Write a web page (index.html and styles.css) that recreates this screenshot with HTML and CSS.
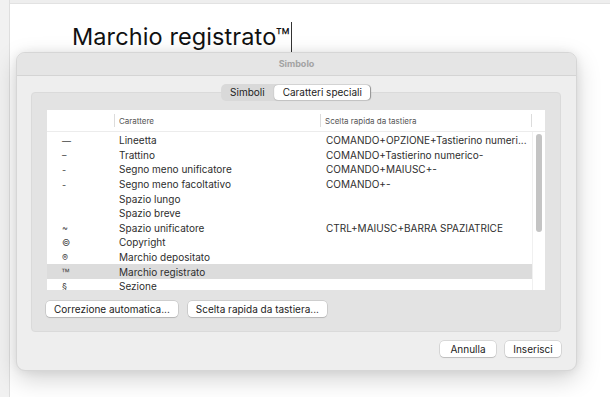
FILE: index.html
```html
<!DOCTYPE html>
<html lang="it">
<head>
<meta charset="utf-8">
<link rel="stylesheet" href="styles.css">
</head>
<body>
<div class="page">
  <div class="gutter"></div>
  <div class="doc">
    <div class="doc-text"><span class="heading">Marchio registrato™</span><span class="caret"></span></div>
  </div>
</div>

<div class="dialog">
  <div class="titlebar">Simbolo</div>
  <div class="dlg-body">
    <div class="panel">
      <div class="segmented">
        <span class="seg">Simboli</span>
        <span class="seg seg-on">Caratteri speciali</span>
      </div>
      <div class="table">
        <div class="thead">
          <div class="th c1"></div>
          <div class="th c2">Carattere</div>
          <div class="th c3">Scelta rapida da tastiera</div>
          <div class="th c4"></div>
        </div>
        <div class="tbody">
          <div class="rows">
            <div class="row"><span class="c1 sym">—</span><span class="c2">Lineetta</span><span class="c3">COMANDO+OPZIONE+Tastierino numeri...</span></div>
            <div class="row"><span class="c1 sym">–</span><span class="c2">Trattino</span><span class="c3">COMANDO+Tastierino numerico-</span></div>
            <div class="row"><span class="c1 sym">-</span><span class="c2">Segno meno unificatore</span><span class="c3">COMANDO+MAIUSC+-</span></div>
            <div class="row"><span class="c1 sym">-</span><span class="c2">Segno meno facoltativo</span><span class="c3">COMANDO+-</span></div>
            <div class="row"><span class="c1 sym"></span><span class="c2">Spazio lungo</span><span class="c3"></span></div>
            <div class="row"><span class="c1 sym"></span><span class="c2">Spazio breve</span><span class="c3"></span></div>
            <div class="row"><span class="c1 sym">~</span><span class="c2">Spazio unificatore</span><span class="c3">CTRL+MAIUSC+BARRA SPAZIATRICE</span></div>
            <div class="row"><span class="c1 sym">©</span><span class="c2">Copyright</span><span class="c3"></span></div>
            <div class="row"><span class="c1 sym">®</span><span class="c2">Marchio depositato</span><span class="c3"></span></div>
            <div class="row row-sel"><span class="c1 sym tm">™</span><span class="c2">Marchio registrato</span><span class="c3"></span></div>
            <div class="row"><span class="c1 sym">§</span><span class="c2">Sezione</span><span class="c3"></span></div>
          </div>
          <div class="scroll"><div class="thumb"></div></div>
        </div>
      </div>
      <div class="panel-buttons">
        <button class="btn">Correzione automatica...</button>
        <button class="btn">Scelta rapida da tastiera...</button>
      </div>
    </div>
    <div class="footer">
      <button class="btn btn-foot">Annulla</button>
      <button class="btn btn-foot">Inserisci</button>
    </div>
  </div>
</div>
</body>
</html>
```

FILE: styles.css
```css
* { box-sizing: border-box; }
html, body { margin: 0; padding: 0; }
body {
  width: 610px;
  height: 397px;
  overflow: hidden;
  background: #ffffff;
  font-family: "Inter", "Liberation Sans", sans-serif;
  position: relative;
}
.page {
  display: flex;
  height: 397px;
}
.gutter {
  width: 10px;
  background: #f1f1f1;
  border-right: 1px solid #dedede;
}
.doc {
  flex: 1;
  border-top: 3px solid #eeeeee;
  position: relative;
}
.doc::before {
  content: "";
  display: block;
  height: 1px;
  background: #e2e2e2;
}
.doc-text {
  display: flex;
  align-items: flex-start;
  padding: 18px 0 0 62px;
}
.heading {
  font-size: 23.5px;
  color: #111;
  letter-spacing: 0.1px;
  line-height: 30px;
}
.caret {
  width: 1px;
  height: 30px;
  background: #333;
  margin-left: 1px;
}

.dialog {
  position: absolute;
  left: 16px;
  top: 52px;
  width: 561px;
  height: 319px;
  background: #eeeeee;
  border-radius: 9px;
  border: 1px solid #d6d6d6;
  box-shadow: 0 8px 24px rgba(0,0,0,0.18), 0 0 10px rgba(0,0,0,0.07);
  display: flex;
  flex-direction: column;
  overflow: hidden;
}
.titlebar {
  height: 23px;
  background: #e5e5e5;
  border-bottom: 1px solid #d4d4d4;
  text-align: center;
  font-size: 9px;
  font-weight: 700;
  color: #a3a3a3;
  line-height: 22px;
}
.dlg-body {
  flex: 1;
  padding: 16px 15px 0 14px;
  display: flex;
  flex-direction: column;
}
.panel {
  position: relative;
  height: 240px;
  background: #e3e3e3;
  border: 1px solid #dadada;
  border-radius: 4px;
  padding: 17px 15px 0 15px;
}
.segmented {
  position: absolute;
  top: -9px;
  left: 50%;
  transform: translateX(-50%);
  display: flex;
  background: #d9d9d9;
  border-radius: 5px;
  padding: 1px;
  gap: 3px;
  font-size: 10px;
  color: #222;
}
.seg {
  padding: 0 6px 0 8px;
  height: 15px;
  line-height: 15px;
  border-radius: 4px;
  white-space: nowrap;
}
.seg-on {
  background: #ffffff;
  box-shadow: 0 0 1px rgba(0,0,0,0.3), 0 1px 1px rgba(0,0,0,0.08);
  padding: 0 8px 0 9px;
}

.table {
  background: #ffffff;
  width: 498px;
  height: 180px;
  display: flex;
  flex-direction: column;
  overflow: hidden;
}
.thead {
  display: flex;
  height: 22px;
  border-bottom: 1px solid #ececec;
  font-size: 8px;
  color: #555;
  align-items: stretch;
  flex: none;
}
.th {
  padding: 0 4px;
  line-height: 22px;
  position: relative;
}
.th.c2::before, .th.c3::before, .th.c4::before {
  content: "";
  position: absolute;
  left: -1px;
  top: 4px;
  bottom: 4px;
  width: 1px;
  background: #dcdcdc;
}
.c1 { width: 68px; flex: none; }
.c2 { width: 206px; flex: none; }
.c3 { width: 211px; flex: none; }
.c4 { width: 13px; flex: none; }
.tbody {
  flex: 1;
  display: flex;
  overflow: hidden;
}
.rows {
  width: 485px;
  display: flex;
  flex-direction: column;
  padding-top: 1px;
}
.row {
  display: flex;
  height: 14.6px;
  flex: none;
  align-items: center;
  font-size: 10px;
  color: #2e2e2e;
  white-space: nowrap;
}
.row .c2 { padding-left: 4px; }
.row .c3 { padding-left: 5px; }
.row-sel { background: #dcdcdc; }
.sym {
  padding-left: 15px;
  font-size: 9px;
  color: #444;
}
.tm {
  font-family: "Liberation Sans", sans-serif;
  font-size: 9px;
  padding-left: 14px;
}
.scroll {
  width: 13px;
  border-left: 1px solid #f0f0f0;
  padding: 2px 3px 0 3px;
}
.thumb {
  width: 6px;
  height: 98px;
  background: #c4c4c4;
  border-radius: 3px;
}

.panel-buttons {
  display: flex;
  gap: 10px;
  margin-top: 11px;
  margin-left: -1px;
}
.btn {
  font-family: "Inter", "Liberation Sans", sans-serif;
  font-size: 10px;
  color: #222;
  background: #ffffff;
  border: none;
  border-radius: 4px;
  height: 16px;
  padding: 0 8px;
  box-shadow: 0 0 0 0.5px rgba(0,0,0,0.18), 0 1px 1px rgba(0,0,0,0.12);
  line-height: 16px;
}
.footer {
  display: flex;
  justify-content: flex-end;
  gap: 9px;
  margin-top: 9px;
}
.btn-foot {
  width: 56px;
  padding: 0;
}
```
